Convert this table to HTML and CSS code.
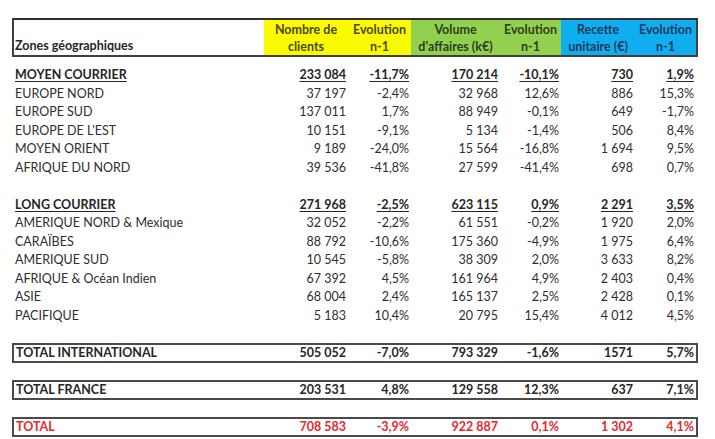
FILE: index.html
```html
<!DOCTYPE html>
<html lang="fr">
<head>
<meta charset="utf-8">
<title>Zones géographiques</title>
<link rel="stylesheet" href="styles.css">
</head>
<body>
<div class="sheet">
  <div class="row head">
    <div class="c lbl hz">Zones géographiques</div>
    <div class="c h yel"><span>Nombre de</span><span>clients</span></div>
    <div class="c h yel"><span>Evolution</span><span>n-1</span></div>
    <div class="c h grn"><span>Volume</span><span>d'affaires (k€)</span></div>
    <div class="c h grn"><span>Evolution</span><span>n-1</span></div>
    <div class="c h blu"><span>Recette</span><span>unitaire (€)</span></div>
    <div class="c h blu"><span>Evolution</span><span>n-1</span></div>
  </div>

  <div class="body">
    <div class="row sub"><div class="c lbl">MOYEN COURRIER</div><div class="c n">233 084</div><div class="c n">-11,7%</div><div class="c n">170 214</div><div class="c n">-10,1%</div><div class="c n">730</div><div class="c n">1,9%</div></div>
    <div class="row"><div class="c lbl">EUROPE NORD</div><div class="c n">37 197</div><div class="c n">-2,4%</div><div class="c n">32 968</div><div class="c n">12,6%</div><div class="c n">886</div><div class="c n">15,3%</div></div>
    <div class="row"><div class="c lbl">EUROPE SUD</div><div class="c n">137 011</div><div class="c n">1,7%</div><div class="c n">88 949</div><div class="c n">-0,1%</div><div class="c n">649</div><div class="c n">-1,7%</div></div>
    <div class="row"><div class="c lbl">EUROPE DE L'EST</div><div class="c n">10 151</div><div class="c n">-9,1%</div><div class="c n">5 134</div><div class="c n">-1,4%</div><div class="c n">506</div><div class="c n">8,4%</div></div>
    <div class="row"><div class="c lbl">MOYEN ORIENT</div><div class="c n">9 189</div><div class="c n">-24,0%</div><div class="c n">15 564</div><div class="c n">-16,8%</div><div class="c n">1 694</div><div class="c n">9,5%</div></div>
    <div class="row"><div class="c lbl">AFRIQUE DU NORD</div><div class="c n">39 536</div><div class="c n">-41,8%</div><div class="c n">27 599</div><div class="c n">-41,4%</div><div class="c n">698</div><div class="c n">0,7%</div></div>
    <div class="row blank"></div>
    <div class="row sub"><div class="c lbl">LONG COURRIER</div><div class="c n">271 968</div><div class="c n">-2,5%</div><div class="c n">623 115</div><div class="c n">0,9%</div><div class="c n">2 291</div><div class="c n">3,5%</div></div>
    <div class="row"><div class="c lbl">AMERIQUE NORD &amp; Mexique</div><div class="c n">32 052</div><div class="c n">-2,2%</div><div class="c n">61 551</div><div class="c n">-0,2%</div><div class="c n">1 920</div><div class="c n">2,0%</div></div>
    <div class="row"><div class="c lbl">CARAÏBES</div><div class="c n">88 792</div><div class="c n">-10,6%</div><div class="c n">175 360</div><div class="c n">-4,9%</div><div class="c n">1 975</div><div class="c n">6,4%</div></div>
    <div class="row"><div class="c lbl">AMERIQUE SUD</div><div class="c n">10 545</div><div class="c n">-5,8%</div><div class="c n">38 309</div><div class="c n">2,0%</div><div class="c n">3 633</div><div class="c n">8,2%</div></div>
    <div class="row"><div class="c lbl">AFRIQUE &amp; Océan Indien</div><div class="c n">67 392</div><div class="c n">4,5%</div><div class="c n">161 964</div><div class="c n">4,9%</div><div class="c n">2 403</div><div class="c n">0,4%</div></div>
    <div class="row"><div class="c lbl">ASIE</div><div class="c n">68 004</div><div class="c n">2,4%</div><div class="c n">165 137</div><div class="c n">2,5%</div><div class="c n">2 428</div><div class="c n">0,1%</div></div>
    <div class="row"><div class="c lbl">PACIFIQUE</div><div class="c n">5 183</div><div class="c n">10,4%</div><div class="c n">20 795</div><div class="c n">15,4%</div><div class="c n">4 012</div><div class="c n">4,5%</div></div>
  </div>

  <div class="totals">
    <div class="row tot"><div class="c lbl">TOTAL INTERNATIONAL</div><div class="c n">505 052</div><div class="c n">-7,0%</div><div class="c n">793 329</div><div class="c n">-1,6%</div><div class="c n">1571</div><div class="c n">5,7%</div></div>
    <div class="row tot"><div class="c lbl">TOTAL FRANCE</div><div class="c n">203 531</div><div class="c n">4,8%</div><div class="c n">129 558</div><div class="c n">12,3%</div><div class="c n">637</div><div class="c n">7,1%</div></div>
    <div class="row tot red"><div class="c lbl">TOTAL</div><div class="c n">708 583</div><div class="c n">-3,9%</div><div class="c n">922 887</div><div class="c n">0,1%</div><div class="c n">1 302</div><div class="c n">4,1%</div></div>
  </div>
</div>
</body>
</html>
```

FILE: styles.css
```css
html, body {
  margin: 0;
  padding: 0;
  background: #ffffff;
}

body {
  font-family: Lato, "Open Sans", "DejaVu Sans", sans-serif;
  font-size: 12.5px;
  color: #2e2e2e;
}

.sheet {
  padding: 18px 0 0 12px;
  width: 686px;
}

.row {
  display: grid;
  grid-template-columns: 250px 84px 63px 89px 61px 74px 61px;
  border-left: 2px solid transparent;
  border-right: 2px solid transparent;
}

.c {
  white-space: nowrap;
}

.lbl {
  padding-left: 1px;
}

.n {
  text-align: right;
  padding-right: 2px;
}

/* header */
.head {
  border: 2px solid #3f3f3f;
  border-top-color: #2f2f2f;
  height: 35px;
}

.h {
  display: flex;
  flex-direction: column;
  align-items: center;
  justify-content: center;
  font-weight: 700;
  line-height: 17px;
  padding-top: 1px;
}

.hz {
  font-weight: 700;
  align-self: end;
  line-height: 17px;
  padding-bottom: 1px;
  color: #262626;
}

.yel {
  background: #fbfb00;
  color: #4a4716;
}

.grn {
  background: #92d050;
  color: #2f3d20;
}

.blu {
  background: #10aef0;
  color: #1b3b57;
}

/* body */
.body {
  padding-top: 9px;
}

.body .row {
  height: 18.5px;
  line-height: 18.5px;
}

.sub {
  font-weight: 700;
  color: #262626;
}

.sub .c {
  text-decoration: underline;
  text-underline-offset: 2px;
}

/* totals */
.totals {
  display: flex;
  flex-direction: column;
  gap: 17px;
  padding-top: 18px;
}

.tot {
  border: 2px solid #4a4a4a;
  height: 16px;
  line-height: 16px;
  font-weight: 700;
  color: #262626;
}

.tot .lbl {
  padding-left: 2px;
}

.red {
  color: #e8282e;
}
```
